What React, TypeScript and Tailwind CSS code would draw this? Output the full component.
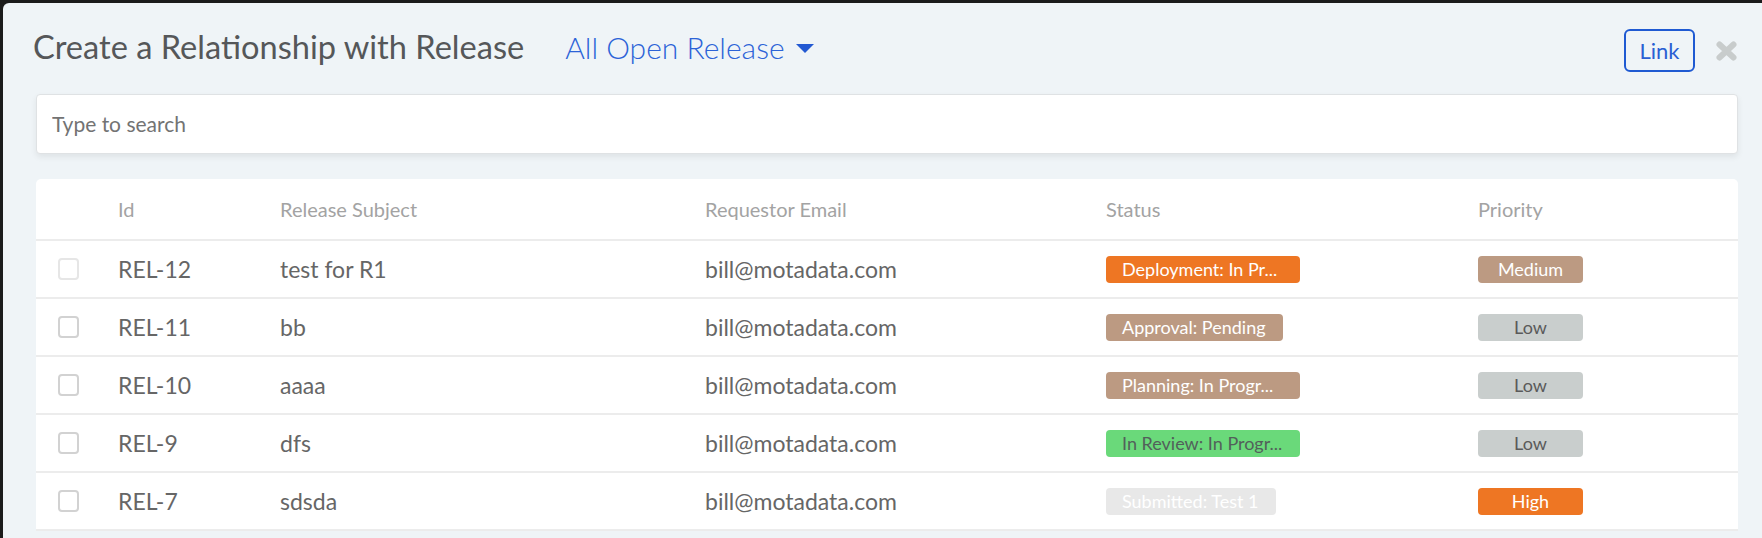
import React from "react";

type Row = {
  id: string;
  subject: string;
  email: string;
  status: string;
  statusCls: string;
  statusW: string;
  priority: string;
  priorityCls: string;
  cbCls: string;
};

const rows: Row[] = [
  {
    id: "REL-12",
    subject: "test for R1",
    email: "bill@motadata.com",
    status: "Deployment: In Pr...",
    statusCls: "bg-[#ee7623] text-white",
    statusW: "w-[194px]",
    priority: "Medium",
    priorityCls: "bg-[#bc9a82] text-white",
    cbCls: "border-[#e6e6e6]",
  },
  {
    id: "REL-11",
    subject: "bb",
    email: "bill@motadata.com",
    status: "Approval: Pending",
    statusCls: "bg-[#bc9a82] text-white",
    statusW: "w-[177px]",
    priority: "Low",
    priorityCls: "bg-[#c9cecd] text-[#5a5a5a]",
    cbCls: "border-[#d2d2d2]",
  },
  {
    id: "REL-10",
    subject: "aaaa",
    email: "bill@motadata.com",
    status: "Planning: In Progr...",
    statusCls: "bg-[#bc9a82] text-white",
    statusW: "w-[194px]",
    priority: "Low",
    priorityCls: "bg-[#c9cecd] text-[#5a5a5a]",
    cbCls: "border-[#d2d2d2]",
  },
  {
    id: "REL-9",
    subject: "dfs",
    email: "bill@motadata.com",
    status: "In Review: In Progr...",
    statusCls: "bg-[#6ad97a] text-[#52605a]",
    statusW: "w-[194px]",
    priority: "Low",
    priorityCls: "bg-[#c9cecd] text-[#5a5a5a]",
    cbCls: "border-[#d2d2d2]",
  },
  {
    id: "REL-7",
    subject: "sdsda",
    email: "bill@motadata.com",
    status: "Submitted: Test 1",
    statusCls: "bg-[#e8e8e8] text-white",
    statusW: "w-[170px]",
    priority: "High",
    priorityCls: "bg-[#ee7623] text-white",
    cbCls: "border-[#d2d2d2]",
  },
];

const gridCols = "grid grid-cols-[82px_162px_425px_401px_372px_1fr]";

export default function App() {
  return (
    <div className="h-[538px] w-[1762px] overflow-hidden bg-[#1b1b1b] pt-[3px] pl-[3px] [font-family:Lato,'Open_Sans',sans-serif]">
      <div className="h-full rounded-tl-[6px] bg-[#eff4f7] pl-[33px] pr-[24px]">
        {/* Header */}
        <div className="flex h-[91px] items-start pt-[24px]">
          <h1 className="-ml-[3px] text-[32.6px] leading-[40px] font-normal text-[#555759]">
            Create a Relationship with Release
          </h1>
          <div className="ml-[41px] flex items-center text-[30px] leading-[40px] font-light text-[#2c63d7]">
            <span>All Open Release</span>
            <svg
              className="ml-[11px] mt-[3px]"
              width="18"
              height="9"
              viewBox="0 0 18 9"
            >
              <path d="M0 0 H18 L9 9 Z" fill="#2359d2" />
            </svg>
          </div>
          <div className="ml-auto mt-[2px] flex items-center">
            <button className="h-[43px] w-[71px] rounded-[6px] border-2 border-[#1f5ad2] text-[22px] text-[#2a5fd3]">
              Link
            </button>
            <svg
              className="ml-[20px]"
              width="23"
              height="22"
              viewBox="0 0 23 22"
            >
              <path
                d="M4.5 4.5 L18.5 17.5 M18.5 4.5 L4.5 17.5"
                stroke="#c8cccc"
                strokeWidth="6"
                strokeLinecap="round"
              />
            </svg>
          </div>
        </div>

        {/* Search */}
        <div className="flex h-[60px] items-center rounded-[4px] border border-[#dfe2e4] bg-white pl-[15px] shadow-[0_3px_6px_rgba(0,0,0,0.07)]">
          <input
            className="w-full bg-transparent text-[21px] text-[#555] outline-none placeholder:text-[#737373]"
            placeholder="Type to search"
          />
        </div>

        {/* Table */}
        <div className="mt-[25px] rounded-t-[5px] bg-white">
          <div
            className={`${gridCols} h-[62px] items-center border-b-2 border-[#ececec] text-[20px] text-[#a3a3a3]`}
          >
            <div />
            <div>Id</div>
            <div>Release Subject</div>
            <div>Requestor Email</div>
            <div>Status</div>
            <div>Priority</div>
          </div>
          {rows.map((r) => (
            <div
              key={r.id}
              className={`${gridCols} h-[58px] items-center border-b-2 border-[#ececec] text-[23px] text-[#666666]`}
            >
              <div className="pl-[22px]">
                <div
                  className={`h-[22px] w-[21px] rounded-[4px] border-2 bg-white ${r.cbCls}`}
                />
              </div>
              <div>{r.id}</div>
              <div>{r.subject}</div>
              <div>{r.email}</div>
              <div>
                <span
                  className={`block h-[27px] ${r.statusW} overflow-hidden whitespace-nowrap rounded-[4px] px-[16px] text-[18px] leading-[27px] ${r.statusCls}`}
                >
                  {r.status}
                </span>
              </div>
              <div>
                <span
                  className={`block h-[27px] w-[105px] rounded-[4px] text-center text-[18px] leading-[27px] ${r.priorityCls}`}
                >
                  {r.priority}
                </span>
              </div>
            </div>
          ))}
        </div>
      </div>
    </div>
  );
}
